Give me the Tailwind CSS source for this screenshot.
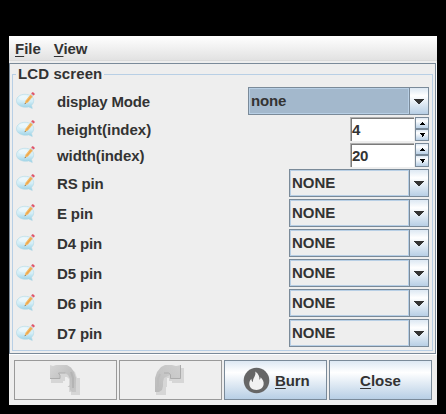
<!DOCTYPE html>
<html lang="en">
<head>
<meta charset="utf-8">
<title>LCD screen</title>
<script src="https://cdn.jsdelivr.net/npm/@tailwindcss/browser@4"></script>
</head>
<body class="w-[446px] h-[414px] overflow-hidden bg-black pl-[9px] pt-[36px] font-['Liberation_Sans',Arial,sans-serif] text-[15px] leading-[18px] font-bold text-[#333333]">
<svg class="absolute h-0 w-0">
  <defs>
    <linearGradient id="bub" x1="0" y1="0" x2="0" y2="1"><stop offset="0" stop-color="#e6f5fa"/><stop offset=".5" stop-color="#d3edf6"/><stop offset="1" stop-color="#94cfe5"/></linearGradient>
    <linearGradient id="bend" x1="0" y1="0" x2="1" y2="1"><stop offset="0" stop-color="#d6d6d6"/><stop offset=".6" stop-color="#bebebe"/><stop offset="1" stop-color="#c8c8c8"/></linearGradient>
    <linearGradient id="bend2" x1="1" y1="0" x2="0" y2="1"><stop offset="0" stop-color="#d0d0d0"/><stop offset=".5" stop-color="#c6c6c6"/><stop offset="1" stop-color="#bababa"/></linearGradient>
    <symbol id="note" viewBox="0 0 20 20">
      <path d="M9 3.300c5 0 8.700 2.500 8.700 6.200 0 2-.8 3.500-2.200 4.700l.8 3.300-3.600-1.600c-6 1.300-12.200-1.200-12.200-6.200 0-3.700 3.500-6.400 8.500-6.400z" fill="url(#bub)" stroke="#b0d8e6" stroke-width=".6"/>
      <ellipse cx="7.500" cy="7" rx="4.500" ry="2.500" fill="#fff" opacity=".4"/>
      <path d="M8.700 13l.8-3.300 5-6.200 2.400 1.900-5 6.200z" fill="#f6b860"/>
      <path d="M10.600 11l5.200-6.500" stroke="#e09a45" stroke-width=".7"/>
      <path d="M8.600 13.200l.4-1.300 1 .7z" fill="#555"/>
      <path d="M14.400 3.600l2.400 1.900.8-1-2.400-1.900z" fill="#c9d4dc"/>
      <path d="M15.200 2.600l1-1.300c1-.6 2.800.8 2.400 1.900l-1 1.300z" fill="#e0566a"/>
    </symbol>
    <symbol id="arrow" viewBox="0 0 10 5"><path d="M0 0h10v1H9v1H8v1H7v1H6v1H4V4H3V3H2V2H1V1H0z" fill="#333"/></symbol>
    <symbol id="up" viewBox="0 0 5 3"><path d="M2 0h1v1h1v1h1v1H0V2h1V1h1z" fill="#000"/></symbol>
    <symbol id="down" viewBox="0 0 5 4"><path d="M0 0h5v1H4v2H3v1H2V2H1V1H0z" fill="#000"/></symbol>
    <symbol id="undo" viewBox="0 0 30 30">
      <path d="M1 5L20 3l5 4 2 6h3v17h-9v-3h-2V14l-2-2h-2v4h-2v2H1z" fill="#d6d6d6"/>
      <path d="M0 0l3 1 3-1h11l4 2.500 3 4.500 2 6v14h-4l-2-2v-3h-2.500l2.500-2v-6l-2-4-3-2H9l1 2v4H0z" fill="url(#bend)"/>
      <path d="M0 13.500h10v-3L8.500 8h7" fill="none" stroke="#acacac"/>
      <path d="M21 7l2 6v10" fill="none" stroke="#b4b4b4" stroke-width="2"/>
    </symbol>
    <symbol id="redo" viewBox="0 0 30 30">
      <path d="M25 3h4v15H17v-2h-3v-3h-2v9h-1v8H1V13L9 2z" fill="#d6d6d6"/>
      <path d="M26 0v14H15v-4l-2 1-4 2-1 4v4l-1 4-3 2H0V13l2-6 4-5 4-2h7l4 1z" fill="url(#bend2)"/>
      <path d="M25.500 0v13.500H15.500v-4l-2-1.500H9" fill="none" stroke="#acacac"/>
      <path d="M5 9l-2 5v8" fill="none" stroke="#bcbcbc" stroke-width="2"/>
    </symbol>
  </defs>
</svg>
<main class="flex h-[369px] w-[428px] flex-col bg-[#eeeeee]">
  <nav class="flex h-[25px] shrink-0 gap-[13px] border-b border-[#dadada] bg-linear-to-b from-white to-[#e2e2e2] pl-[6px] pt-[4px]">
    <span><u class="underline-offset-2 decoration-1">F</u>ile</span>
    <span class="tracking-[-0.15px]"><u class="underline-offset-2 decoration-1">V</u>iew</span>
  </nav>
  <section class="mt-[2px] h-[292px] w-[428px] shrink-0 border-b border-r border-white">
    <div class="h-[291px] w-[427px] border border-[#7a8a99] pl-[2px]">
      <fieldset class="relative mt-[10px] h-[277px] w-[421px] border border-[#b8cfe5] pl-[3px] pt-[12px]">
        <span class="absolute left-[3px] top-[-10px] bg-[#eeeeee] px-[2px] tracking-[0.1px]">LCD screen</span>
        <div class="flex h-[30px]">
          <svg class="mt-[4px] h-5 w-5"><use href="#note"/></svg>
          <label class="ml-[21px] mt-[6px] grow tracking-[-0.18px]">display Mode</label>
          <div class="mr-[3px] flex h-[28px] w-[181px] border border-[#7a8a99] bg-[#a3b8cc]">
            <div class="w-[160px] border border-[#b8cfe5] pl-[1px] pt-[3px] tracking-[-0.15px]">none</div>
            <div class="flex grow items-center justify-center border-l border-[#7a8a99] bg-linear-to-b from-[#dde8f3] via-white via-30% to-[#b8cfe5]"><svg class="h-[5px] w-[10px]"><use href="#arrow"/></svg></div>
          </div>
        </div>
        <div class="flex h-[26px]">
          <svg class="mt-[2px] h-5 w-5"><use href="#note"/></svg>
          <label class="ml-[21px] mt-[4px] grow">height(index)</label>
          <div class="mr-[3px] flex h-[24px] w-[79px]">
            <div class="mr-[1px] w-[64px] border-l border-t border-[#b0b0b0] bg-white"><div class="h-full border-l border-t border-[#7a7a7a] pt-[2px]">4</div></div>
            <div class="flex grow flex-col">
              <div class="flex h-[12px] items-center justify-center border border-[#7a8a99] bg-linear-to-b from-[#dde8f3] via-white via-30% to-[#b8cfe5]"><svg class="h-[3px] w-[5px]"><use href="#up"/></svg></div>
              <div class="flex h-[12px] items-center justify-center border border-[#7a8a99] bg-linear-to-b from-[#dde8f3] via-white via-30% to-[#b8cfe5]"><svg class="h-[4px] w-[5px]"><use href="#down"/></svg></div>
            </div>
          </div>
        </div>
        <div class="flex h-[26px]">
          <svg class="mt-[2px] h-5 w-5"><use href="#note"/></svg>
          <label class="ml-[21px] mt-[4px] grow tracking-[-0.08px]">width(index)</label>
          <div class="mr-[3px] flex h-[24px] w-[79px]">
            <div class="mr-[1px] w-[64px] border-l border-t border-[#b0b0b0] bg-white"><div class="h-full border-l border-t border-[#7a7a7a] pt-[2px] tracking-[-0.3px]">20</div></div>
            <div class="flex grow flex-col">
              <div class="flex h-[12px] items-center justify-center border border-[#7a8a99] bg-linear-to-b from-[#dde8f3] via-white via-30% to-[#b8cfe5]"><svg class="h-[3px] w-[5px]"><use href="#up"/></svg></div>
              <div class="flex h-[12px] items-center justify-center border border-[#7a8a99] bg-linear-to-b from-[#dde8f3] via-white via-30% to-[#b8cfe5]"><svg class="h-[4px] w-[5px]"><use href="#down"/></svg></div>
            </div>
          </div>
        </div>
        <div id="pins"></div>
      </fieldset>
    </div>
  </section>
  <footer class="flex gap-[2px] pl-[5px] pt-[5px]">
    <button aria-label="Undo" class="flex h-[40px] w-[103px] items-start border border-[#999999] pl-[35px] pt-[4px]"><svg class="h-[30px] w-[30px]"><use href="#undo"/></svg></button>
    <button aria-label="Redo" class="flex h-[40px] w-[103px] items-start border border-[#999999] pl-[35px] pt-[4px]"><svg class="h-[30px] w-[30px]"><use href="#redo"/></svg></button>
    <button class="flex h-[40px] w-[103px] items-center border border-[#7a8a99] bg-linear-to-b from-[#dde8f3] via-white via-30% to-[#b8cfe5] pl-[18px]">
      <svg class="h-[27px] w-[27px]" viewBox="0 0 27 27"><circle cx="13.500" cy="13.500" r="12.800" fill="#666"/><path d="M12.200 4.500c3.400 2.300 4.600 5.300 4.200 8.300.8-.5 1.200-1.400 1.200-2.500 2.300 2.400 3.400 4.700 3 7.200-.6 3.300-3.300 5.400-7 5.400-4.400 0-7.500-2.800-7.300-6.500.1-2 .9-3.400 2.100-4.600 0 1.500.5 2.600 1.600 3.200-.5-4 3.400-6 2.200-10.500z" fill="#f2f2f2"/></svg>
      <span class="ml-[5px] mt-[2px] tracking-[-0.1px]"><u class="underline-offset-2 decoration-1">B</u>urn</span>
    </button>
    <button class="h-[40px] w-[103px] border border-[#7a8a99] bg-linear-to-b from-[#dde8f3] via-white via-30% to-[#b8cfe5] pt-[2px]"><u class="underline-offset-2 decoration-1">C</u>lose</button>
  </footer>
</main>
<script>
document.getElementById('pins').innerHTML = ['RS pin','E pin','D4 pin','D5 pin','D6 pin','D7 pin'].map(name => `
  <div class="flex h-[30px]">
    <svg class="mt-[4px] h-5 w-5"><use href="#note"/></svg>
    <label class="ml-[21px] mt-[6px] grow tracking-[-0.15px]">${name}</label>
    <div class="mr-[3px] flex h-[28px] w-[140px] border border-[#7a8a99]">
      <div class="w-[119px] border border-[#b8cfe5] pl-[1px] pt-[3px]">NONE</div>
      <div class="flex grow items-center justify-center border-l border-[#7a8a99] bg-linear-to-b from-[#dde8f3] via-white via-30% to-[#b8cfe5]"><svg class="h-[5px] w-[10px]"><use href="#arrow"/></svg></div>
    </div>
  </div>`).join('');
</script>
</body>
</html>
